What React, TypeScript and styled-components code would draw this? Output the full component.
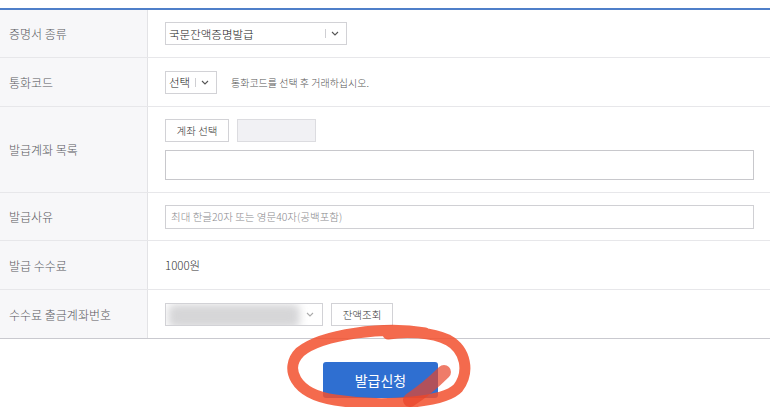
import styled, { createGlobalStyle } from 'styled-components';

const GlobalStyle = createGlobalStyle`
  html, body {
    margin: 0;
    padding: 0;
    background: #ffffff;
  }
  body {
    font-family: 'Noto Sans CJK KR', 'Noto Sans', sans-serif;
    font-weight: 300;
    color: #333;
  }
`;

const Page = styled.div`
  width: 777px;
  height: 407px;
  padding-top: 8px;
  box-sizing: border-box;
  position: relative;
  overflow: hidden;
`;

const FormTable = styled.div`
  width: 770px;
  border-top: 2px solid #4f7fc9;
  border-bottom: 1px solid #c9c9cf;
`;

const Row = styled.div<{ $height: number; $last?: boolean }>`
  display: grid;
  grid-template-columns: 148px 1fr;
  height: ${(p) => p.$height}px;
  border-bottom: ${(p) => (p.$last ? 'none' : '1px solid #e7e7ea')};
`;

const Label = styled.div`
  background: #f7f7f9;
  border-right: 1px solid #e3e3e6;
  display: flex;
  align-items: center;
  padding-left: 9px;
  font-size: 12px;
  color: #5a5a60;
`;

const Cell = styled.div`
  display: flex;
  align-items: center;
  padding-left: 17px;
  padding-right: 16px;
  gap: 8px;
  font-size: 11.5px;
  color: #333;
`;

const StackCell = styled(Cell)`
  flex-direction: column;
  align-items: stretch;
  justify-content: center;
  gap: 8px;
`;

const Inline = styled.div`
  display: flex;
  align-items: center;
  gap: 8px;
`;

const Select = styled.div<{ $width: number }>`
  width: ${(p) => p.$width}px;
  height: 23px;
  box-sizing: border-box;
  border: 1px solid #d2d2d6;
  background: #fff;
  display: flex;
  align-items: center;
  padding-left: 3px;
  font-size: 11.5px;
  color: #222;
`;

const SelectText = styled.span`
  flex: 1;
  white-space: nowrap;
`;

const Caret = styled.span`
  display: flex;
  align-items: center;
  height: 100%;
  padding: 0 7px 0 6px;
  position: relative;
  &::before {
    content: '';
    position: absolute;
    left: 0;
    top: 6px;
    bottom: 6px;
    border-left: 1px solid #cfcfd3;
  }
`;

const Hint = styled.span`
  font-size: 10px;
  color: #555;
  margin-left: 6px;
`;

const Button = styled.button<{ $width: number }>`
  width: ${(p) => p.$width}px;
  height: 23px;
  border: 1px solid #d2d2d6;
  background: #fff;
  font-family: inherit;
  font-weight: 300;
  font-size: 10.5px;
  color: #333;
  padding: 0;
`;

const GreyBox = styled.div`
  width: 79px;
  height: 23px;
  box-sizing: border-box;
  border: 1px solid #dcdce0;
  background: #f1f1f4;
`;

const TextArea = styled.div`
  height: 30px;
  border: 1px solid #c8c8cc;
  box-sizing: border-box;
`;

const TextInput = styled.div`
  flex: 1;
  height: 24px;
  box-sizing: border-box;
  border: 1px solid #d0d0d4;
  display: flex;
  align-items: center;
  padding-left: 5px;
  font-size: 10.5px;
  color: #8a8a8e;
`;

const BlurSelect = styled.div`
  width: 158px;
  height: 23px;
  box-sizing: border-box;
  border: 1px solid #d2d2d6;
  position: relative;
  overflow: hidden;
  display: flex;
  align-items: center;
  justify-content: flex-end;
  padding-right: 8px;
`;

const Smudge = styled.div`
  position: absolute;
  left: 2px;
  top: 0px;
  width: 132px;
  height: 24px;
  background: #d6d6d8;
  filter: blur(4px);
  border-radius: 6px;
`;

const Footer = styled.div`
  display: flex;
  justify-content: center;
  padding-top: 23px;
  padding-right: 16px;
`;

const Submit = styled.button`
  width: 115px;
  height: 36px;
  border: none;
  border-radius: 3px;
  background: #2f6fd1;
  color: #fff;
  font-family: inherit;
  font-size: 14px;
  font-weight: 400;
`;

const Scribble = styled.svg`
  position: absolute;
  left: 0;
  top: 0;
  pointer-events: none;
`;

const Chevron = ({ color = '#555' }: { color?: string }) => (
  <svg width="8" height="5" viewBox="0 0 8 5">
    <path d="M1 1 L4 4 L7 1" fill="none" stroke={color} strokeWidth="1.1" />
  </svg>
);

export default function App() {
  return (
    <>
      <GlobalStyle />
      <Page>
        <FormTable>
          <Row $height={47}>
            <Label>증명서 종류</Label>
            <Cell>
              <Select $width={182}>
                <SelectText>국문잔액증명발급</SelectText>
                <Caret>
                  <Chevron />
                </Caret>
              </Select>
            </Cell>
          </Row>
          <Row $height={48}>
            <Label>통화코드</Label>
            <Cell>
              <Select $width={52}>
                <SelectText>선택</SelectText>
                <Caret>
                  <Chevron />
                </Caret>
              </Select>
              <Hint>통화코드를 선택 후 거래하십시오.</Hint>
            </Cell>
          </Row>
          <Row $height={85}>
            <Label>발급계좌 목록</Label>
            <StackCell>
              <Inline>
                <Button $width={64}>계좌 선택</Button>
                <GreyBox />
              </Inline>
              <TextArea />
            </StackCell>
          </Row>
          <Row $height={47}>
            <Label>발급사유</Label>
            <Cell>
              <TextInput>최대 한글20자 또는 영문40자(공백포함)</TextInput>
            </Cell>
          </Row>
          <Row $height={48}>
            <Label>발급 수수료</Label>
            <Cell>1000원</Cell>
          </Row>
          <Row $height={48} $last>
            <Label>수수료 출금계좌번호</Label>
            <Cell>
              <BlurSelect>
                <Smudge />
                <Chevron color="#aaa" />
              </BlurSelect>
              <Button $width={62}>잔액조회</Button>
            </Cell>
          </Row>
        </FormTable>
        <Footer>
          <Submit>발급신청</Submit>
        </Footer>
        <Scribble width="777" height="407" viewBox="0 0 777 407">
          <path
            d="M425 333 C385 326 322 334 300 352 C284 368 294 394 335 400 C385 408 445 402 458 388 C470 372 466 350 448 340 C432 332 405 331 388 334"
            fill="none"
            stroke="#f2502e"
            strokeOpacity="0.85"
            strokeWidth="11"
            strokeLinecap="round"
          />
          <path
            d="M410 400 C422 392 434 382 444 372"
            fill="none"
            stroke="#e8452a"
            strokeOpacity="0.7"
            strokeWidth="14"
            strokeLinecap="round"
          />
        </Scribble>
      </Page>
    </>
  );
}
